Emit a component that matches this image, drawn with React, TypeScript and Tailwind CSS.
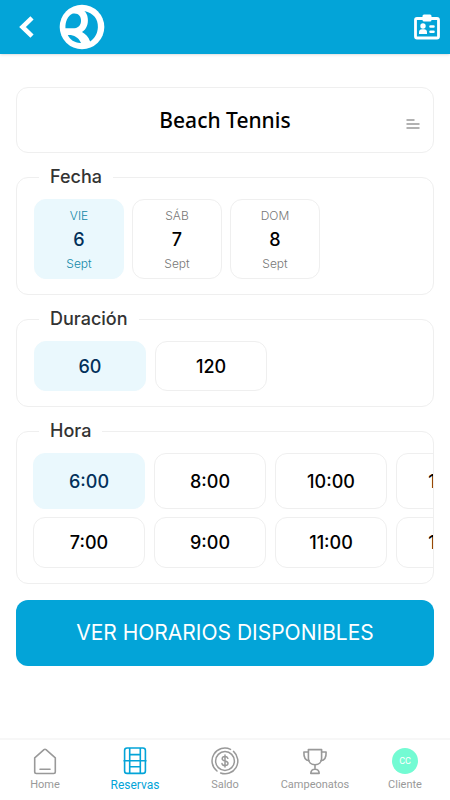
import React, { useState } from "react";

const days = [
  { name: "VIE", day: "6", month: "Sept" },
  { name: "SÁB", day: "7", month: "Sept" },
  { name: "DOM", day: "8", month: "Sept" },
];
const durations = ["60", "120"];
const hours = ["6:00", "7:00", "8:00", "9:00", "10:00", "11:00", "12:00", "13:00"];

const Logo = () => (
  <svg viewBox="178 14 136 136" className="size-[46px]" aria-hidden="true">
    <circle cx="246" cy="82" r="66" fill="#fff" />
    <g fill="#03a4d8">
      <path d="M197 86 C196 66 204 50 217 43 C234 39 244 50 243 65 C242 79 234 86 218 86 Z" />
      <path d="M253 35 C280 41 294 59 293 83 C292 102 284 116 270 125 C265 111 257 103 246 97 C260 88 265 72 263 56 C262 46 258 40 253 35 Z" />
      <path d="M204 106 C221 105 235 112 243 129 C225 130 211 121 204 106 Z" />
    </g>
  </svg>
);

const BadgeIcon = () => (
  <svg viewBox="0 0 26 26" className="size-[26px]" fill="none" aria-hidden="true">
    <rect x="1.5" y="4.5" width="23" height="19.5" rx="1.5" stroke="#fff" strokeWidth="2.8" />
    <rect x="8.5" y="0.5" width="9" height="7" rx="1.5" fill="#fff" />
    <circle cx="9" cy="12" r="2.7" fill="#fff" />
    <path d="M5 20v-1.8c0-1.7 1.2-2.9 3-2.9h2c1.8 0 3 1.2 3 2.9V20z" fill="#fff" />
    <path d="M16.5 12.5h3M16.5 17.7h3" stroke="#fff" strokeWidth="2.6" strokeLinecap="round" />
  </svg>
);

const HomeIcon = () => (
  <svg viewBox="0 0 28 28" className="size-7" fill="none" stroke="currentColor" strokeWidth="1.6" strokeLinejoin="round" strokeLinecap="round">
    <path d="M3.7 10.8L13 2.7q1-.8 2 0l9.3 8.1v14q0 1.7-1.7 1.7H5.4q-1.7 0-1.7-1.7z" />
    <path d="M9 22.3h10" />
  </svg>
);

const CourtIcon = () => (
  <svg viewBox="0 0 28 28" className="size-7" fill="none" stroke="currentColor" strokeWidth="1.6">
    <rect x="3.6" y="1" width="20.8" height="25.4" rx="2.5" />
    <path d="M8.7 1v25.4M19.3 1v25.4M8.7 7.6h10.6M8.7 19.8h10.6M2.5 13.7h23" />
  </svg>
);

const CoinIcon = () => (
  <svg viewBox="0 0 28 28" className="size-7" fill="none" stroke="currentColor" strokeWidth="1.5" strokeLinecap="round">
    <circle cx="14" cy="14" r="9.4" />
    <path d="M6 24A12.8 12.8 0 0 1 19.5 2.4" />
    <path d="M22.5 4.4A12.8 12.8 0 0 1 9.6 26" />
    <path d="M16.8 11.3c-.4-1.2-1.4-1.8-2.8-1.8-1.7 0-2.8.9-2.8 2.2 0 3.2 5.8 1.4 5.8 4.6 0 1.4-1.2 2.3-3 2.3-1.6 0-2.7-.7-3-2M14 8v12" />
  </svg>
);

const TrophyIcon = () => (
  <svg viewBox="0 0 28 28" className="size-7" fill="none" stroke="currentColor" strokeWidth="1.6" strokeLinejoin="round" strokeLinecap="round">
    <path d="M7.4 2.6h13.2v8.6c0 4-2.7 6.6-6.6 6.6s-6.6-2.6-6.6-6.6z" />
    <path d="M7.4 5H2.9q-.4 8.2 5.2 8.8M20.6 5h4.5q.4 8.2-5.2 8.8" />
    <path d="M14 17.8v4M9.8 26.4q.2-4.2 4.2-4.2t4.2 4.2z" />
  </svg>
);

const tabs = [
  { name: "Home", icon: <HomeIcon /> },
  { name: "Reservas", icon: <CourtIcon />, active: true },
  { name: "Saldo", icon: <CoinIcon /> },
  { name: "Campeonatos", icon: <TrophyIcon /> },
  {
    name: "Cliente",
    icon: (
      <span className="my-px flex size-[26px] items-center justify-center rounded-full bg-[#73fbd3] text-[9px] text-white">
        CC
      </span>
    ),
  },
];

const Section: React.FC<{ title: string; children: React.ReactNode }> = ({ title, children }) => (
  <fieldset className="mt-3 min-w-0 rounded-xl border border-[#efefef] pb-[15px]">
    <legend className="ml-[22px] px-[11px] text-lg leading-6 font-medium text-[#333]">{title}</legend>
    <div className="pt-[10px]">{children}</div>
  </fieldset>
);

const Option: React.FC<{
  selected: boolean;
  onClick: () => void;
  className?: string;
  children: React.ReactNode;
}> = ({ selected, onClick, className = "", children }) => (
  <button
    type="button"
    aria-pressed={selected}
    onClick={onClick}
    className={`rounded-xl border pt-px text-lg font-medium ${
      selected ? "border-[#eaf8fd] bg-[#eaf8fd] text-[#02305a]" : "border-[#efefef] bg-white text-black"
    } ${className}`}
  >
    {children}
  </button>
);

export default function App() {
  const [day, setDay] = useState("6");
  const [duration, setDuration] = useState("60");
  const [hour, setHour] = useState("6:00");

  return (
    <div className="flex min-h-screen flex-col bg-white font-[Inter,sans-serif]">
      <header className="flex h-[54px] items-center bg-[#03a4d8] pr-[10px] pl-[18px] shadow-sm">
        <button type="button" aria-label="Volver">
          <svg viewBox="0 0 18 24" className="h-6 w-[18px]" fill="none" stroke="#fff" strokeWidth="4.6">
            <path d="M14 2.8L4.5 12l9.5 9.2" />
          </svg>
        </button>
        <a href="#inicio" aria-label="Inicio" className="ml-[23px]">
          <Logo />
        </a>
        <button type="button" aria-label="Credencial" className="ml-auto">
          <BadgeIcon />
        </button>
      </header>

      <main className="px-4 pt-[33px] pb-6">
        <button
          type="button"
          className="grid h-[66px] w-full grid-cols-[1fr_auto_1fr] items-center rounded-xl border border-[#efefef] px-[13px]"
        >
          <span className="col-start-2 pt-px font-['Noto_Sans',sans-serif] text-[21px] font-medium text-black">
            Beach Tennis
          </span>
          <svg viewBox="0 0 14 10" className="mt-2 h-[10px] w-[14px] justify-self-end" stroke="#999" strokeWidth="1.3">
            <path d="M0.5 1h8M0.5 5h13M0.5 9h13" />
          </svg>
        </button>

        <Section title="Fecha">
          <div className="flex gap-2 px-[17px]">
            {days.map((d) => (
              <Option
                key={d.day}
                selected={day === d.day}
                onClick={() => setDay(d.day)}
                className="flex h-20 w-[90px] flex-col items-center justify-center"
              >
                <span className={`text-xs leading-5 font-light ${day === d.day ? "text-[#1288a8]" : "text-[#777]"}`}>
                  {d.name}
                </span>
                <span className="leading-7">{d.day}</span>
                <span className={`text-xs leading-5 font-light ${day === d.day ? "text-[#1288a8]" : "text-[#777]"}`}>
                  {d.month}
                </span>
              </Option>
            ))}
          </div>
        </Section>

        <Section title="Duración">
          <div className="flex gap-[9px] px-[17px]">
            {durations.map((d) => (
              <Option
                key={d}
                selected={duration === d}
                onClick={() => setDuration(d)}
                className="h-[50px] w-28"
              >
                {d}
              </Option>
            ))}
          </div>
        </Section>

        <Section title="Hora">
          <div className="grid auto-cols-[112px] grid-flow-col grid-rows-[56px_51px] gap-x-[9px] gap-y-2 overflow-x-auto pl-4 [scrollbar-width:none]">
            {hours.map((h) => (
              <Option key={h} selected={hour === h} onClick={() => setHour(h)}>
                {h}
              </Option>
            ))}
          </div>
        </Section>

        <button type="button" className="mt-4 h-[66px] w-full rounded-xl bg-[#03a4d8] text-[21px] text-white">
          VER HORARIOS DISPONIBLES
        </button>
      </main>

      <nav className="mt-auto grid h-[62px] grid-cols-5 border-t-2 border-[#f7f7f7] pt-[7px] font-[Roboto,sans-serif]">
        {tabs.map((t) => (
          <a
            key={t.name}
            href={`#${t.name.toLowerCase()}`}
            className={`flex flex-col items-center ${
              t.active ? "text-xs leading-5 text-[#03a4d8]" : "text-[11px] leading-5 text-[#999]"
            }`}
          >
            {t.icon}
            {t.name}
          </a>
        ))}
      </nav>
    </div>
  );
}
